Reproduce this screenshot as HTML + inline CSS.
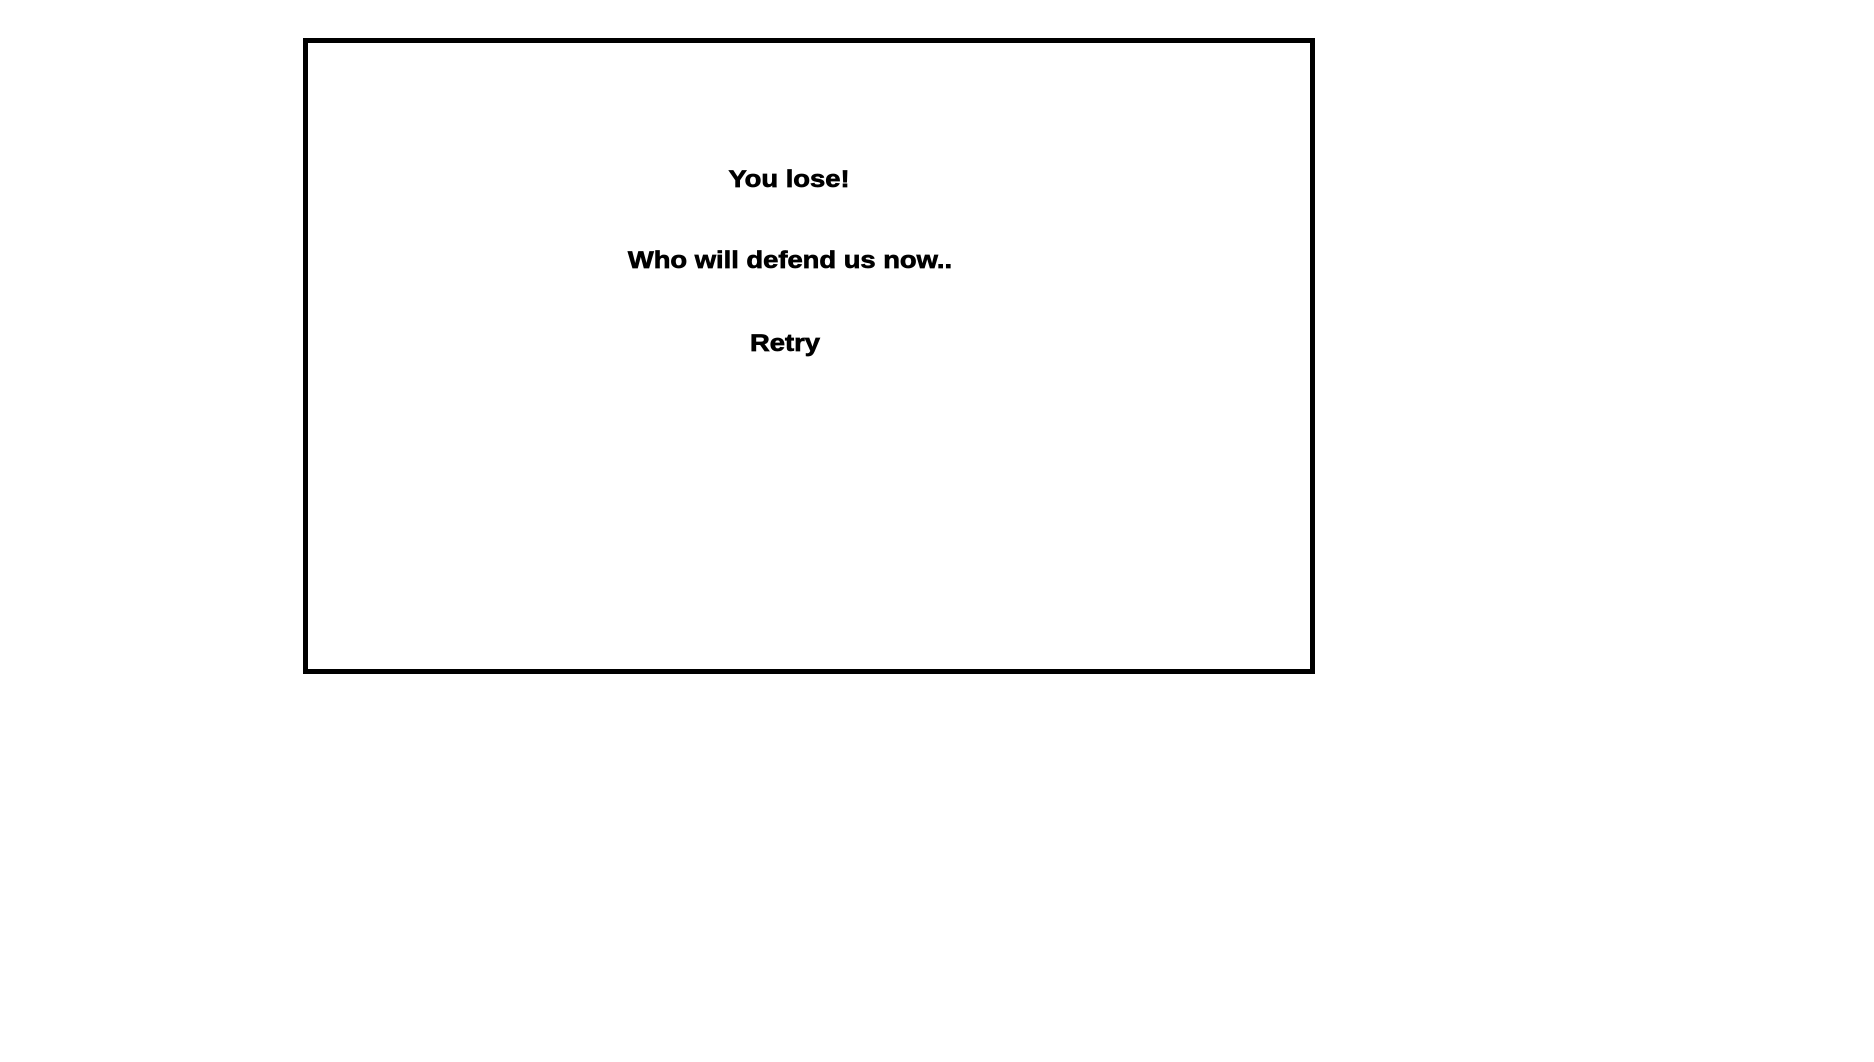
<!DOCTYPE html>
<html><head><meta charset="utf-8"><style>
html,body{margin:0;padding:0;background:#fff;width:1874px;height:1062px;overflow:hidden;}
.box{position:absolute;left:303px;top:38px;width:1002px;height:626px;border:5px solid #000;}
.t{position:absolute;font-family:"Liberation Sans",Arial,sans-serif;font-weight:bold;font-size:24px;line-height:24px;white-space:nowrap;color:#000;-webkit-text-stroke:0.7px #000;transform:translateX(-50%) scaleX(1.14);}
</style></head><body>
<div class="box"></div>
<div class="t" style="left:789px;top:168px;">You lose!</div>
<div class="t" style="left:790px;top:249px;">Who will defend us now..</div>
<div class="t" style="left:785px;top:332px;">Retry</div>
</body></html>
